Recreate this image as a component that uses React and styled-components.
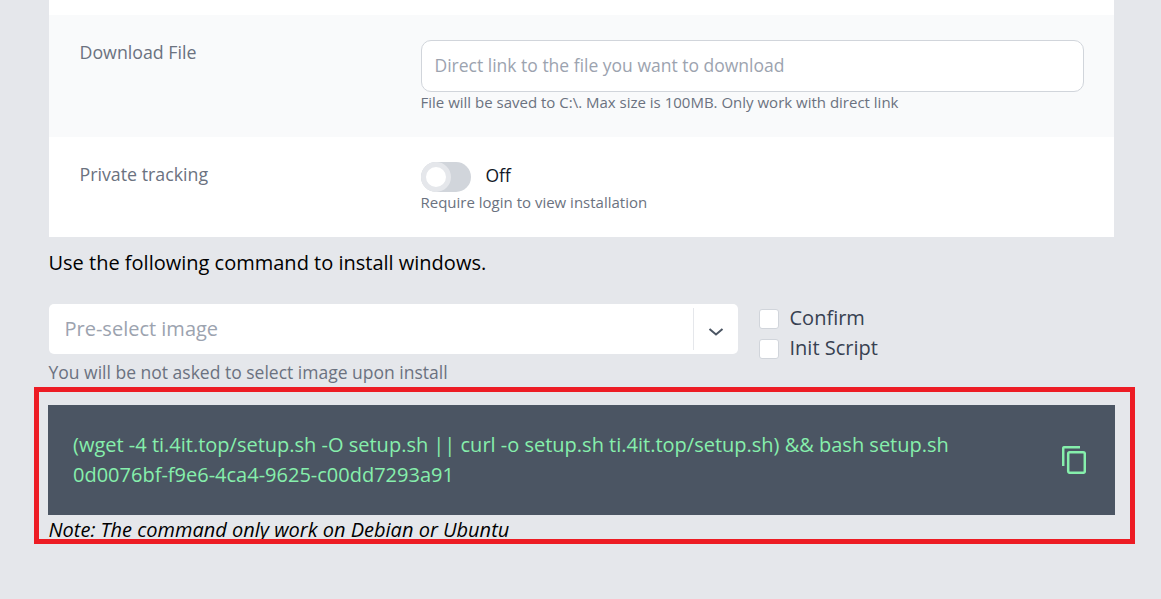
import React from "react";
import styled, { createGlobalStyle } from "styled-components";

const Global = createGlobalStyle`
  html, body { margin: 0; padding: 0; height: 100%; overflow: hidden; background: #e5e7eb; }
  body { font-family: "Open Sans", "Liberation Sans", sans-serif; color: #000; }
  * { box-sizing: border-box; }
`;

const Page = styled.div`
  position: relative;
  width: 1161px;
  height: 599px;
  padding: 0 47px 0 48.5px;
  overflow: hidden;
`;
const Card = styled.div`
  background: #fff;
  padding-top: 15px;
  width: 1065px;
`;
const Row = styled.div`
  display: grid;
  grid-template-columns: 341px 663px;
  padding: ${(p) => p.$pad};
  padding-left: 31px;
  height: ${(p) => p.$h}px;
  background: ${(p) => (p.$shaded ? "#f9fafb" : "#fff")};
`;
const Label = styled.div`
  font-size: 17.8px;
  font-weight: 500;
  line-height: 24px;
  color: #6b7280;
`;
const Field = styled.div`
  display: flex;
  flex-direction: column;
`;
const TextInput = styled.input`
  width: 663px;
  height: 52px;
  border: 1px solid #d1d5db;
  border-radius: 10px;
  background: #fff;
  padding: 0 13px 2px;
  font: 400 17.5px/28px "Open Sans", sans-serif;
  outline: none;
  &::placeholder { color: #9ca3af; opacity: 1; }
`;
const Help = styled.div`
  font-size: 15px;
  line-height: 20px;
  color: #6b7280;
`;
const ToggleRow = styled.div`
  display: flex;
  align-items: center;
  height: 30px;
  gap: 15px;
`;
const Track = styled.div`
  width: 50px;
  height: 30px;
  border-radius: 15px;
  background: #d1d5db;
  display: flex;
`;
const Knob = styled.div`
  width: 30px;
  height: 30px;
  border-radius: 50%;
  background: #fff;
  border: 5px solid #e5e7eb;
`;
const ToggleText = styled.span`
  font-size: 17.5px;
  line-height: 28px;
  margin-top: -5px;
  color: #111827;
`;
const Lead = styled.p`
  margin: 0;
  padding-top: 12px;
  height: 67px;
  font-size: 20px;
  line-height: 28px;
`;
const Options = styled.div`
  display: flex;
  gap: 21px;
  align-items: flex-start;
`;
const SelectCol = styled.div`
  width: 689px;
`;
const SelectBox = styled.div`
  height: 50px;
  background: #fff;
  border-radius: 5px;
  display: flex;
  align-items: center;
`;
const SelectText = styled.div`
  flex: 1;
  padding-left: 16px;
  padding-bottom: 1px;
  font-size: 20px;
  color: #9ca3af;
`;
const Divider = styled.div`
  width: 1px;
  height: 42px;
  background: #e5e7eb;
`;
const Chevron = styled.div`
  width: 44px;
  display: flex;
  justify-content: center;
  padding-top: 5px;
  color: #4b5563;
`;
const Hint = styled.div`
  font-size: 17.5px;
  line-height: 24px;
  color: #6b7280;
  padding-top: 6px;
`;
const Checks = styled.div`
  display: flex;
  flex-direction: column;
`;
const CheckRow = styled.label`
  display: flex;
  align-items: center;
  height: 30px;
  gap: 11px;
  font-size: 20px;
  line-height: 28px;
  color: #374151;
`;
const Box = styled.span`
  width: 20px;
  height: 20px;
  background: #fff;
  border: 1px solid #d1d5db;
  border-radius: 3px;
`;
const CheckLabel = styled.span`
  margin-top: -2px;
`;
const CommandBox = styled.div`
  margin: 21px 0 0 -0.5px;
  width: 1067px;
  height: 110px;
  background: #4b5563;
  padding: 25px 29px 25px 25px;
  display: flex;
  align-items: center;
  justify-content: space-between;
  color: #86efac;
  font-size: 20px;
  line-height: 30px;
`;
const Command = styled.div`
  width: 930px;
  align-self: flex-start;
`;
const CopyIcon = styled.svg`
  width: 24px;
  height: 28px;
  color: #86efac;
`;
const Note = styled.div`
  padding-top: 1px;
  font-size: 20px;
  line-height: 28px;
  font-style: italic;
`;
const Highlight = styled.div`
  position: absolute;
  left: 34px;
  top: 387px;
  width: 1101px;
  height: 157px;
  border: 5px solid #ed1c24;
  pointer-events: none;
`;

export default function App() {
  return (
    <Page>
      <Global />
      <Card>
        <Row $shaded $h={122} $pad="25px 30px 0 0">
          <Label>Download File</Label>
          <Field>
            <TextInput placeholder="Direct link to the file you want to download" readOnly />
            <Help>File will be saved to C:\. Max size is 100MB. Only work with direct link</Help>
          </Field>
        </Row>
        <Row $h={100} $pad="25px 30px 0 0">
          <Label>Private tracking</Label>
          <Field>
            <ToggleRow>
              <Track><Knob /></Track>
              <ToggleText>Off</ToggleText>
            </ToggleRow>
            <Help>Require login to view installation</Help>
          </Field>
        </Row>
      </Card>
      <Lead>Use the following command to install windows.</Lead>
      <Options>
        <SelectCol>
          <SelectBox>
            <SelectText>Pre-select image</SelectText>
            <Divider />
            <Chevron>
              <svg width="20" height="20" viewBox="0 0 20 20" fill="none" stroke="currentColor" strokeWidth="2">
                <path d="M3.5 7 L10 12.5 L16.5 7" />
              </svg>
            </Chevron>
          </SelectBox>
          <Hint>You will be not asked to select image upon install</Hint>
        </SelectCol>
        <Checks>
          <CheckRow><Box /><CheckLabel>Confirm</CheckLabel></CheckRow>
          <CheckRow><Box /><CheckLabel>Init Script</CheckLabel></CheckRow>
        </Checks>
      </Options>
      <CommandBox>
        <Command>
          (wget -4 ti.4it.top/setup.sh -O setup.sh || curl -o setup.sh ti.4it.top/setup.sh) &amp;&amp; bash setup.sh 0d0076bf-f9e6-4ca4-9625-c00dd7293a91
        </Command>
        <CopyIcon viewBox="0 0 24 28" fill="none" stroke="currentColor" strokeWidth="2.5">
          <path d="M1.2 20 V2.5 Q1.2 1.2 2.5 1.2 H18" />
          <rect x="6.2" y="6.2" width="16.6" height="20.6" rx="1.5" />
        </CopyIcon>
      </CommandBox>
      <Note>Note: The command only work on Debian or Ubuntu</Note>
      <Highlight />
    </Page>
  );
}
